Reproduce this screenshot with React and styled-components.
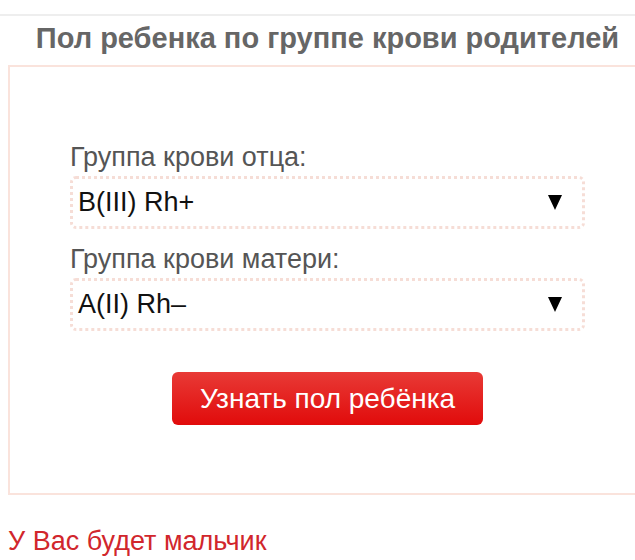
import React from "react";
import styled, { createGlobalStyle } from "styled-components";

const Global = createGlobalStyle`
  html, body { margin: 0; padding: 0; background: #fff; overflow: hidden; }
  body { font-family: "Liberation Sans", Arial, sans-serif; }
`;

const Page = styled.div`
  width: 639px;
  padding-left: 8px;
`;

const TopRule = styled.div`
  margin-left: -8px;
  width: 647px;
  margin-top: 14px;
  border-top: 2px solid #eeeeee;
`;

const Title = styled.h1`
  margin: 0 0 5px;
  font-size: 29px;
  line-height: 44px;
  font-weight: bold;
  color: #666666;
  text-align: center;
  white-space: nowrap;
`;

const Box = styled.div`
  border: 2px solid #fae3dc;
  padding: 75px 0 68px 60px;
  display: flex;
  flex-direction: column;
`;

const Label = styled.div`
  font-size: 27px;
  line-height: 30px;
  color: #555555;
  margin: ${(p) => p.$top || 0}px 0 4px;
  padding-left: 0;
  white-space: nowrap;
`;

const Select = styled.div`
  width: 515px;
  height: 53px;
  box-sizing: border-box;
  border: 3px dotted #f6ddd6;
  border-radius: 6px;
  display: flex;
  align-items: center;
  justify-content: space-between;
  padding: 0 20px 0 5px;
  font-size: 27px;
  color: #111111;
`;

const Arrow = styled.svg`
  width: 14px;
  height: 15px;
  display: block;
`;

const Button = styled.button`
  align-self: flex-start;
  margin: 41px 0 0 102px;
  width: 311px;
  height: 53px;
  border: none;
  border-radius: 6px;
  background: linear-gradient(#e83a36, #e10b0b);
  color: #ffffff;
  font-family: "Liberation Sans", Arial, sans-serif;
  font-size: 28px;
  padding: 0;
  cursor: pointer;
`;

const Result = styled.div`
  margin-top: 31px;
  padding-left: 0;
  font-size: 27px;
  line-height: 30px;
  color: #d1262c;
`;

function Dropdown({ value }) {
  return (
    <Select>
      <span>{value}</span>
      <Arrow viewBox="0 0 14 15">
        <polygon points="0,0 14,0 7,15" fill="#000" />
      </Arrow>
    </Select>
  );
}

export default function App() {
  return (
    <>
      <Global />
      <Page>
        <TopRule />
        <Title>Пол ребенка по группе крови родителей</Title>
        <Box>
          <Label>Группа крови отца:</Label>
          <Dropdown value="B(III) Rh+" />
          <Label $top={15}>Группа крови матери:</Label>
          <Dropdown value="A(II) Rh–" />
          <Button>Узнать пол ребёнка</Button>
        </Box>
        <Result>У Вас будет мальчик</Result>
      </Page>
    </>
  );
}
